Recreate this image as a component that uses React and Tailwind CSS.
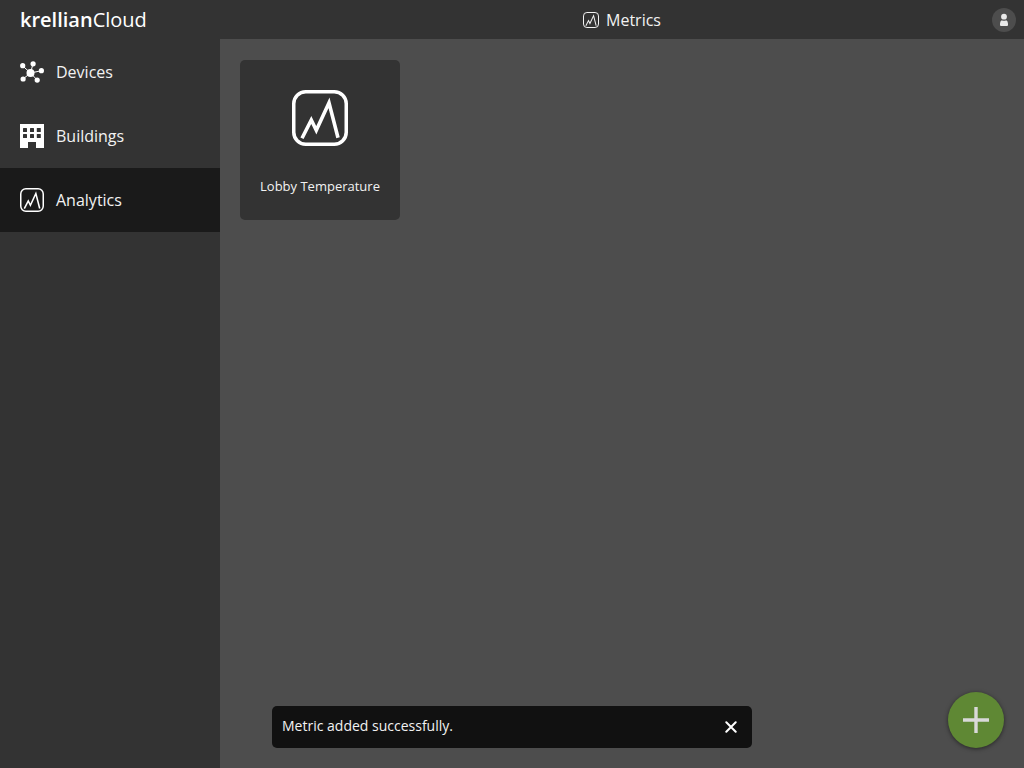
import React, { useState } from "react";

function MetricIcon({ className }) {
  return (
    <svg viewBox="0 0 56 56" className={className} fill="none" stroke="currentColor" aria-hidden="true">
      <rect x="1.75" y="1.75" width="52.5" height="52.5" rx="12" strokeWidth="3.5" />
      <path d="M10 48.300 L19.300 30 L24.300 40.200 L37 12.800 L46 47.800" strokeWidth="3.6" strokeMiterlimit="10" />
    </svg>
  );
}

function DevicesIcon({ className }) {
  return (
    <svg viewBox="0 0 24 24" className={className} fill="currentColor" aria-hidden="true">
      <path d="M10.5 13 L2.6 5.8 M10.5 13 L13 3.8 M10.5 13 L21.5 10.7 M10.5 13 L3 19 M10.5 13 L17.2 20" stroke="currentColor" strokeWidth="1" />
      <circle cx="10.5" cy="13" r="4" />
      <circle cx="2.7" cy="5.7" r="2.6" />
      <circle cx="13.1" cy="3.8" r="2.6" />
      <circle cx="21.4" cy="10.7" r="2.6" />
      <circle cx="3.1" cy="19" r="2.6" />
      <circle cx="17.2" cy="20.1" r="2.6" />
    </svg>
  );
}

const windowColumns = [3, 10, 16.8];
const windowRows = [4, 10];

function BuildingIcon({ className }) {
  return (
    <svg viewBox="0 0 24 24" className={className} aria-hidden="true">
      <path d="M0 0H24V24H16V18H8V24H0Z" fill="currentColor" />
      {windowRows.map((y) =>
        windowColumns.map((x) => (
          <rect key={x + "-" + y} x={x} y={y} width="4" height="4" rx="0.5" fill="#333333" />
        ))
      )}
    </svg>
  );
}

const sections = [
  { name: "Devices", Icon: DevicesIcon },
  { name: "Buildings", Icon: BuildingIcon },
  { name: "Analytics", Icon: MetricIcon },
];

export default function App() {
  const [toastOpen, setToastOpen] = useState(true);
  const current = "Analytics";

  return (
    <div className="flex min-h-screen bg-[#4d4d4d] font-['Open_Sans',sans-serif] text-base text-[#f2f2f2]">
      <aside className="w-[220px] shrink-0 bg-[#333333]">
        <a href="#home" className="flex h-10 items-baseline px-5 pt-1 text-xl leading-8 text-white">
          <span className="font-semibold">krellian</span>
          <span>Cloud</span>
        </a>
        <nav aria-label="Sections">
          {sections.map(({ name, Icon }) => (
            <a
              key={name}
              href={"#" + name.toLowerCase()}
              aria-current={name === current ? "page" : undefined}
              className={"flex h-16 items-center gap-3 px-5 " + (name === current ? "bg-[#1a1a1a]" : "")}
            >
              <Icon className="size-6 text-white" />
              <span>{name}</span>
            </a>
          ))}
        </nav>
      </aside>

      <div className="flex min-w-0 flex-1 flex-col">
        <header className="grid h-[39px] grid-cols-[1fr_auto_1fr] items-center bg-[#333333]">
          <h1 className="col-start-2 flex items-center gap-[7px]">
            <MetricIcon className="size-4" />
            Metrics
          </h1>
          <button
            type="button"
            aria-label="Account"
            className="mr-2 flex size-6 items-center justify-center justify-self-end rounded-full bg-[#4d4d4d]"
          >
            <svg viewBox="0 0 24 24" className="size-6" fill="#e9e9e9" aria-hidden="true">
              <circle cx="12" cy="8.700" r="2.900" />
              <path d="M9.800 12.200 Q12 13.400 14.200 12.200 Q16 13 16 15.800 V17 Q16 18 15 18 H9 Q8 18 8 17 V15.800 Q8 13 9.800 12.200 Z" />
            </svg>
          </button>
        </header>
        <main className="flex flex-wrap items-start gap-5 px-5 py-[21px]">
          <a href="#lobby-temperature" className="flex size-40 flex-col items-center rounded-[5px] bg-[#333333] pt-[30px]">
            <MetricIcon className="size-14 text-white" />
            <span className="mt-[30px] text-[13px] leading-5">Lobby Temperature</span>
          </a>
        </main>
      </div>

      {toastOpen && (
        <div className="pointer-events-none fixed inset-x-0 bottom-5 flex justify-center">
          <div role="status" className="pointer-events-auto flex h-[42px] w-[480px] max-w-full items-center justify-between rounded-[5px] bg-[#111111] px-2.5 text-sm">
            <p className="pb-0.5">Metric added successfully.</p>
            <button type="button" aria-label="Close" onClick={() => setToastOpen(false)} className="flex size-[22px] items-center justify-center text-white">
              <svg viewBox="0 0 12 12" className="size-3" fill="none" stroke="currentColor" strokeWidth="2" strokeLinecap="round" aria-hidden="true">
                <path d="M1.300 1.300 L10.700 10.700 M10.700 1.300 L1.300 10.700" />
              </svg>
            </button>
          </div>
        </div>
      )}

      <button
        type="button"
        aria-label="Add metric"
        className="fixed right-5 bottom-5 flex size-14 items-center justify-center rounded-full bg-[#5f8834] text-[#d9d9d9] shadow-[0_1px_4px_rgba(0,0,0,0.5)]"
      >
        <svg viewBox="0 0 26 26" className="size-[26px]" fill="currentColor" aria-hidden="true">
          <path d="M11.300 0H14.700V11.300H26V14.700H14.700V26H11.300V14.700H0V11.300H11.300Z" />
        </svg>
      </button>
    </div>
  );
}
